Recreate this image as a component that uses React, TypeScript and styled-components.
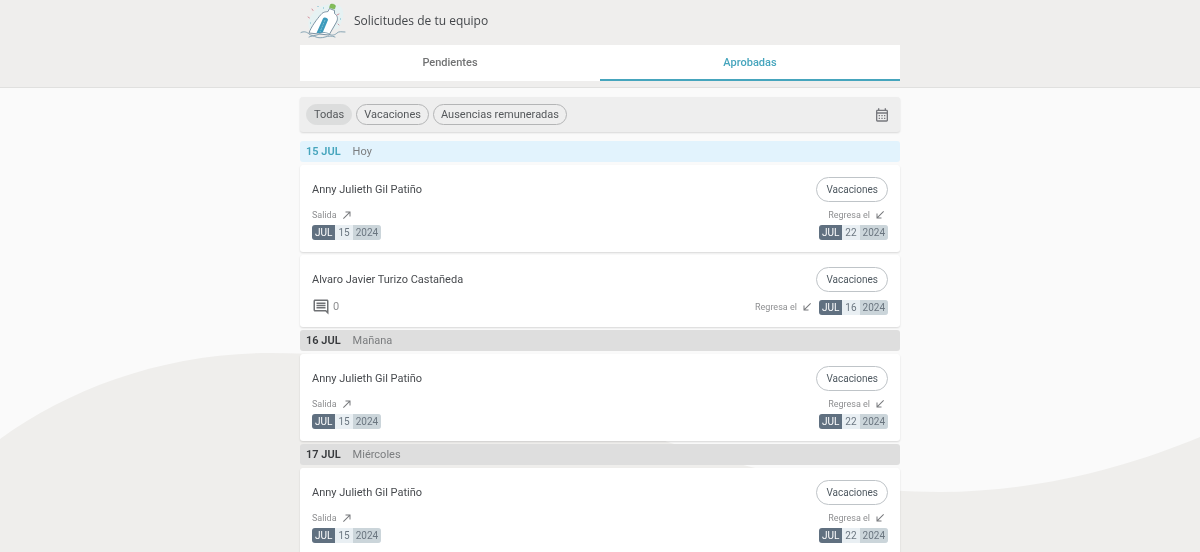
import React from "react";
import styled, { createGlobalStyle } from "styled-components";
import {
  MdCallMade,
  MdCallReceived,
  MdOutlineCalendarMonth,
  MdOutlineComment,
} from "react-icons/md";

const GlobalStyle = createGlobalStyle`
  *, *::before, *::after { box-sizing: border-box; }
  body {
    margin: 0;
    background: #fafafa;
    color: #474a4e;
    font-family: Roboto, "Liberation Sans", sans-serif;
    font-size: 11px;
    line-height: 16px;
  }
  h1, h2, h3, p { margin: 0; font: inherit; }
  button { font: inherit; cursor: pointer; }
`;

const Backdrop = styled.svg`
  position: fixed;
  inset: 0;
  z-index: -1;
  width: 100%;
  height: 100%;
`;

const Header = styled.header`
  padding: 0 16px 6px;
  background: #efeeed;
  border-bottom: 1px solid #e0e0df;
`;

const Column = styled.div`
  max-width: 600px;
  margin: 0 auto;
`;

const TitleRow = styled.div`
  display: flex;
  align-items: center;
  gap: 8px;
  height: 45px;
  padding-bottom: 4px;
`;

const Title = styled.h1`
  font-family: "Open Sans", "Noto Sans", sans-serif;
  font-size: 12px;
  font-weight: 500;
  color: #43464a;
`;

const Tabs = styled.div`
  display: grid;
  grid-template-columns: 1fr 1fr;
  background: #fff;
`;

const Tab = styled.button<{ $active?: boolean }>`
  height: 36px;
  padding: 0;
  border: 0;
  background: none;
  box-shadow: ${(p) => (p.$active ? "inset 0 -2px #46a5bd" : "none")};
  color: ${(p) => (p.$active ? "#46a5bd" : "#717273")};
  font-weight: 500;
`;

const Main = styled.main`
  padding: 9px 16px 16px;
`;

const Filters = styled.div`
  display: flex;
  align-items: center;
  gap: 4px;
  height: 35px;
  padding: 0 10px 0 6px;
  margin-bottom: 9px;
  border-radius: 3px;
  background: #eeeeee;
  box-shadow: 0 1px 2px rgba(0, 0, 0, 0.14);
`;

const Chip = styled.button<{ $active?: boolean }>`
  height: 21px;
  padding: 0 7px;
  border: 1px solid ${(p) => (p.$active ? "#dcdddd" : "#b4b5b6")};
  border-radius: 11px;
  background: ${(p) => (p.$active ? "#dcdddd" : "transparent")};
  color: #55585b;
  line-height: 19px;
`;

const CalendarButton = styled.button`
  display: flex;
  margin-left: auto;
  padding: 0;
  border: 0;
  background: none;
  color: #77787d;
`;

const Stack = styled.div`
  display: flex;
  flex-direction: column;
  gap: 3px;
`;

const DayHeader = styled.h2<{ $today?: boolean }>`
  display: flex;
  align-items: center;
  gap: 12px;
  height: 21px;
  padding: 1px 6px 0;
  border-radius: 3px;
  background: ${(p) => (p.$today ? "#e2f3fd" : "#dedede")};
  color: #7b7d7f;

  strong {
    font-weight: 600;
    color: ${(p) => (p.$today ? "#46a5bd" : "#37393c")};
  }
`;

const Card = styled.article`
  padding: 12px;
  border-radius: 3px;
  background: #fff;
  box-shadow: 0 1px 2px rgba(0, 0, 0, 0.14);
`;

const Row = styled.div`
  display: flex;
  align-items: center;
  justify-content: space-between;
`;

const DetailRow = styled(Row)`
  margin-top: 7px;
`;

const TypeButton = styled.button`
  height: 25px;
  padding: 0 9px;
  border: 1px solid #bfc4c8;
  border-radius: 13px;
  background: #fff;
  color: #4f5961;
  font-size: 10px;
`;

const Leg = styled.div<{ $inline?: boolean; $end?: boolean }>`
  display: flex;
  flex-direction: ${(p) => (p.$inline ? "row" : "column")};
  align-items: ${(p) => (p.$inline ? "center" : p.$end ? "flex-end" : "flex-start")};
  gap: 4px;
`;

const LegLabel = styled.span<{ $end?: boolean }>`
  display: flex;
  align-items: center;
  gap: 4px;
  padding-right: ${(p) => (p.$end ? 2 : 0)}px;
  color: #8e8f91;
  font-size: 9px;
  line-height: 12px;

  svg { color: #77797c; }
`;

const DateBadge = styled.time`
  display: flex;
  height: 15px;
  overflow: hidden;
  border-radius: 3px;
  background: #e9eff3;
  color: #6b7680;
  font-size: 10px;
  line-height: 15px;
`;

const Month = styled.span`
  padding: 0 3px;
  background: #607080;
  color: #fff;
`;

const Day = styled.span`
  padding: 0 3px;
`;

const Year = styled.span`
  padding: 0 3px;
  background: #cbd5da;
`;

const Comments = styled.button`
  display: flex;
  align-items: center;
  gap: 3px;
  height: 16px;
  padding: 0;
  border: 0;
  background: none;
  color: #8e8f91;

  svg { color: #6f7174; }
`;

function BottleLogo() {
  return (
    <svg width="46" height="38" viewBox="0 0 46 38" fill="none" aria-hidden="true">
      <path d="M14 10C20 2 35 0 41 5c5 6 1 15-3 22l-28 1C6 20 10 15 14 10Z" fill="#e6f2f3" />
      <path d="M29.500 6.500 34.500 8.500 34.500 11.500C38 14 38 17 36.500 20L29 33 9 31C11 25 17 17 21 12.500C23.500 9.500 26 10 28 9.500Z" fill="#fff" stroke="#70889a" strokeWidth="0.9" strokeLinejoin="round" />
      <path d="M30.500 2.500C32 1.500 35 2.500 35.500 4L34.500 7 29.500 5.500Z" fill="#83bd58" stroke="#70ac4b" strokeWidth="0.6" strokeLinejoin="round" />
      <path d="M23 16.500C24 14.500 28 15.500 28 18L22.500 31H16.500Z" fill="#3d9abb" />
      <path d="m25 18-5 12" stroke="#8ccada" strokeWidth="0.8" strokeDasharray="2 1" />
      <path d="M1 30.500C4 29 7 30 9 32s7 2 10 0 7-2 10 0 6 1 8-1 5-1 8-1M9 35c3-1.500 5-1 7 0s6 1 9 0 7-1.500 10 0" stroke="#7b9bad" strokeWidth="0.9" strokeLinecap="round" />
      <path d="m12 7 1 1.500M8 15l1.500 1M37 13l2-1M38 22l1 1" stroke="#cf8795" strokeWidth="0.9" strokeLinecap="round" />
      <path d="M18 4v1M23 6h1M40 17h1M10 21h1" stroke="#61b2c8" strokeWidth="0.9" />
    </svg>
  );
}

type DateParts = { month: string; day: string; year: string; iso: string };

const july = (day: string): DateParts => ({
  month: "JUL",
  day,
  year: "2024",
  iso: `2024-07-${day}`,
});

function DateTag({ date }: { date: DateParts }) {
  return (
    <DateBadge dateTime={date.iso}>
      <Month>{date.month}</Month>
      <Day>{date.day}</Day>
      <Year>{date.year}</Year>
    </DateBadge>
  );
}

type Request = {
  name: string;
  type: string;
  departure?: DateParts;
  comeback: DateParts;
  comments?: number;
};

function RequestCard({ request }: { request: Request }) {
  const { name, type, departure, comeback, comments } = request;
  return (
    <Card>
      <Row>
        <h3>{name}</h3>
        <TypeButton type="button">{type}</TypeButton>
      </Row>
      <DetailRow>
        {departure ? (
          <Leg>
            <LegLabel>
              Salida <MdCallMade size={12} />
            </LegLabel>
            <DateTag date={departure} />
          </Leg>
        ) : (
          <Comments type="button" aria-label="Comentarios">
            <MdOutlineComment size={18} />
            {comments}
          </Comments>
        )}
        <Leg $inline={!departure} $end>
          <LegLabel $end>
            Regresa el <MdCallReceived size={12} />
          </LegLabel>
          <DateTag date={comeback} />
        </Leg>
      </DetailRow>
    </Card>
  );
}

const anny: Request = {
  name: "Anny Julieth Gil Patiño",
  type: "Vacaciones",
  departure: july("15"),
  comeback: july("22"),
};

const alvaro: Request = {
  name: "Alvaro Javier Turizo Castañeda",
  type: "Vacaciones",
  comeback: july("16"),
  comments: 0,
};

const days = [
  { date: "15 JUL", label: "Hoy", today: true, requests: [anny, alvaro] },
  { date: "16 JUL", label: "Mañana", today: false, requests: [anny] },
  { date: "17 JUL", label: "Miércoles", today: false, requests: [anny] },
];

export default function App() {
  return (
    <>
      <GlobalStyle />
      <Backdrop viewBox="0 0 1200 552" preserveAspectRatio="none" aria-hidden="true">
        <path
          d="M0 439C70 388 165 353 270 353C455 353 555 403 665 441C755 471 835 492 940 492C1035 492 1125 468 1200 437V552H0Z"
          fill="#efeeec"
        />
      </Backdrop>
      <Header>
        <Column>
          <TitleRow>
            <BottleLogo />
            <Title>Solicitudes de tu equipo</Title>
          </TitleRow>
          <Tabs role="tablist">
            <Tab type="button" role="tab" aria-selected={false}>
              Pendientes
            </Tab>
            <Tab type="button" role="tab" aria-selected $active>
              Aprobadas
            </Tab>
          </Tabs>
        </Column>
      </Header>
      <Main>
        <Column>
          <Filters>
            <Chip type="button" $active>
              Todas
            </Chip>
            <Chip type="button">Vacaciones</Chip>
            <Chip type="button">Ausencias remuneradas</Chip>
            <CalendarButton type="button" aria-label="Calendario">
              <MdOutlineCalendarMonth size={16} />
            </CalendarButton>
          </Filters>
          <Stack>
            {days.map((day) => (
              <Stack as="section" key={day.date}>
                <DayHeader $today={day.today}>
                  <strong>{day.date}</strong>
                  <span>{day.label}</span>
                </DayHeader>
                {day.requests.map((request) => (
                  <RequestCard key={request.name} request={request} />
                ))}
              </Stack>
            ))}
          </Stack>
        </Column>
      </Main>
    </>
  );
}
